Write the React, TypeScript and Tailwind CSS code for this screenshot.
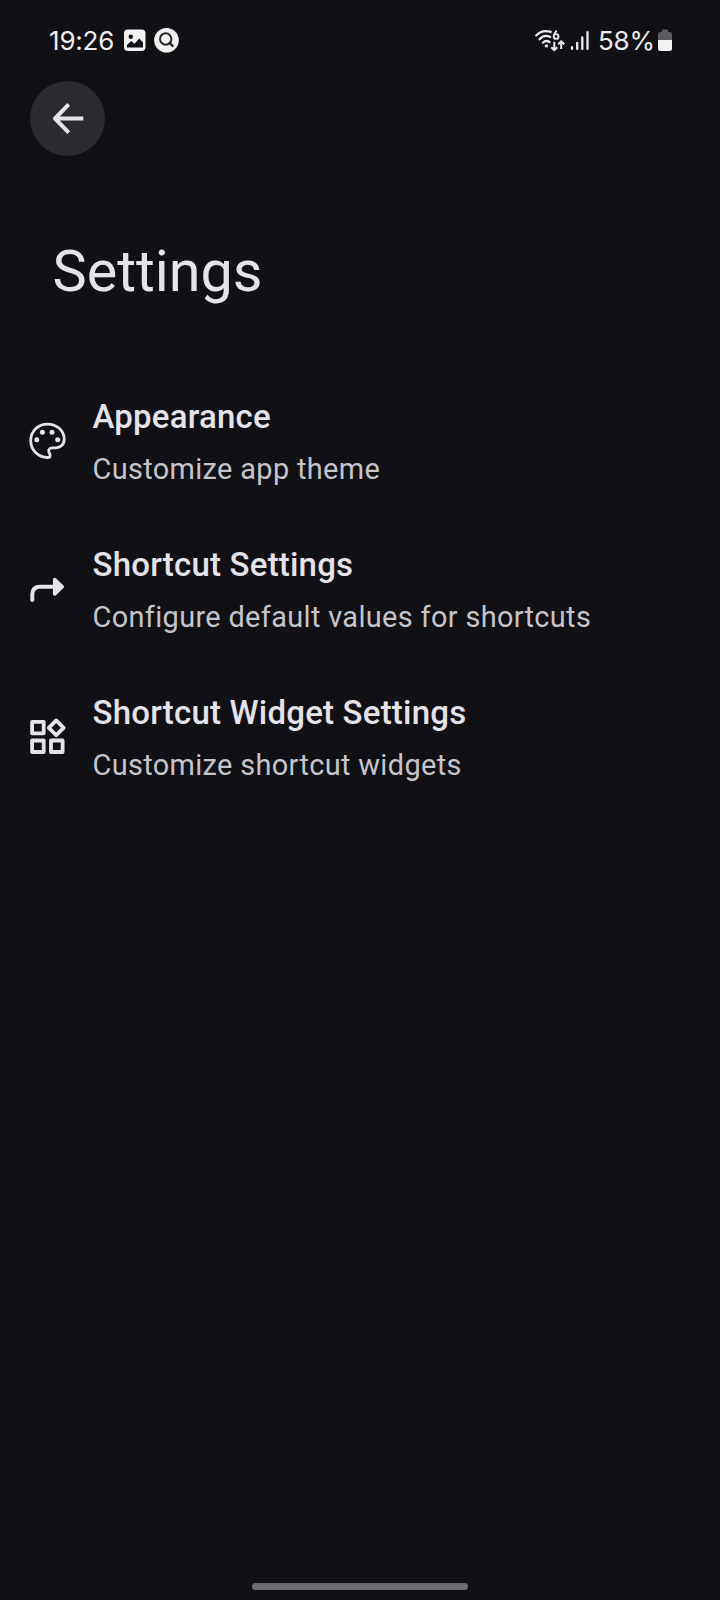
import type { ReactNode } from "react"

function PaletteIcon() {
  return (
    <svg width="48" height="48" viewBox="0 0 48 48" fill="none" stroke="#e5e3e9" strokeWidth="2.8">
      <path
        d="M23.5 40.5C14.2 40.5 6.7 33.1 6.7 23.6S14.2 7.1 23.6 7.1s16.6 6.8 16.6 15.3c0 5.3-3.8 8.4-8.4 8.4h-3.500c-2.600 0-4 1.700-3.600 3.700.3 1.400 1.400 2.200 1.400 3.900 0 1.300-1 2.100-2.600 2.100Z"
        strokeLinejoin="round"
      />
      <g fill="#e5e3e9" stroke="none">
        <circle cx="12.8" cy="22.7" r="2.5" />
        <circle cx="18.4" cy="15.3" r="2.5" />
        <circle cx="28" cy="15.3" r="2.5" />
        <circle cx="33.7" cy="22.7" r="2.5" />
      </g>
    </svg>
  )
}

function ShortcutIcon() {
  return (
    <svg width="48" height="48" viewBox="0 0 48 48" fill="none" stroke="#e5e3e9">
      <path d="M8.3 34.9V29.5Q8.3 21.7 16 21.7H30" strokeWidth="4" strokeLinecap="round" />
      <path d="M30.7 14.5L38.3 21.7L30.7 28.9Z" fill="#e5e3e9" strokeWidth="3.5" strokeLinejoin="round" />
    </svg>
  )
}

function WidgetsIcon() {
  return (
    <svg width="48" height="48" viewBox="0 0 48 48" fill="none" stroke="#e5e3e9" strokeWidth="3.8" strokeLinejoin="round">
      <rect x="8.1" y="8.9" width="11.6" height="11.4" />
      <rect x="8.1" y="27.5" width="11.6" height="11.5" />
      <rect x="27" y="27.5" width="11.6" height="11.5" />
      <path d="M32.2 7.400L39.600 14.800L32.200 22.200L24.800 14.800Z" />
    </svg>
  )
}

const items: { title: string; subtitle: string; icon: ReactNode }[] = [
  { title: "Appearance", subtitle: "Customize app theme", icon: <PaletteIcon /> },
  { title: "Shortcut Settings", subtitle: "Configure default values for shortcuts", icon: <ShortcutIcon /> },
  { title: "Shortcut Widget Settings", subtitle: "Customize shortcut widgets", icon: <WidgetsIcon /> },
]

function StatusBar() {
  return (
    <div className="flex h-20 items-center justify-between px-12 font-[Inter,sans-serif] text-[26px] leading-none text-[#ededf0]">
      <div className="flex items-center">
        <span className="w-[76px] pt-[2px] pl-px tracking-[-0.2px]">19:26</span>
        {/* Picture notification */}
        <svg width="22" height="22" viewBox="0 0 22 22">
          <rect y="0.5" width="21.5" height="21.5" rx="4" fill="#f2f2f3" />
          <circle cx="6.8" cy="7.8" r="2.2" fill="#111116" />
          <path d="M3 18.5V16L7.300 12L10.500 14.800L15.300 9.500L19 13.500V18.500Z" fill="#111116" />
        </svg>
        {/* Search notification */}
        <svg className="ml-2" width="25" height="26" viewBox="0 0 25 26" fill="none" stroke="#28282c">
          <circle cx="12.5" cy="13.3" r="12.3" fill="#f2f2f3" stroke="none" />
          <circle cx="11.7" cy="12" r="5.7" strokeWidth="2" />
          <path d="M15.8 16.100L18.600 18.900" strokeWidth="2.4" strokeLinecap="round" />
        </svg>
      </div>
      <div className="flex items-center">
        <svg width="56" height="26" viewBox="0 0 56 26" fill="none" stroke="#ededf0">
          {/* Wi-Fi 6 */}
          <g strokeWidth="2.2" strokeLinecap="round">
            <path d="M2.2 8.4C6 4.300 11.500 3.300 16.800 4.900" />
            <path d="M5.5 12.3C8.300 8.900 12.500 8.200 16.200 9.900" />
            <path d="M8.8 15.7C11 13.700 13.600 13.600 15.700 15.200" />
          </g>
          <circle cx="12.4" cy="18.9" r="1.7" fill="#ededf0" stroke="none" />
          <circle cx="22.1" cy="9.500" r="2.4" strokeWidth="1.9" />
          <path d="M19.700 9.300C19.700 6.900 20.900 5.500 22.700 3.600" strokeWidth="1.9" />
          <path d="M20.3 14.800V23M17.300 20.200L20.300 23.200L23.300 20.200M27.200 22V14.500M24.200 17.300L27.200 14.300L30.200 17.300" strokeWidth="2" />
          {/* Signal bars */}
          <path d="M38 20.200V21.900M43.200 15.800V21.900M48.300 10.400V21.900M53.500 5.100V21.900" strokeWidth="2.3" strokeLinecap="round" />
        </svg>
        <span className="ml-2 w-[60px] whitespace-nowrap pt-[2px] tracking-[-0.2px]">58%</span>
        <svg width="14" height="22" viewBox="0 0 14 22">
          <path d="M4 1.5Q4 0.5 5 0.5H9Q10 0.5 10 1.5V3H11.5Q14 3 14 5.5V11.500H0V5.500Q0 3 2.500 3H4Z" fill="#5c5c60" />
          <path d="M0 11H14V19.500Q14 22 11.500 22H2.500Q0 22 0 19.500Z" fill="#f2f2f3" />
        </svg>
      </div>
    </div>
  )
}

export default function App() {
  return (
    <div className="flex h-[1600px] w-[720px] flex-col overflow-hidden bg-[#111015] font-[Roboto,sans-serif] text-[#e5e3e9]">
      <StatusBar />

      <button className="mt-[0.5px] ml-[30px] flex size-[75px] items-center justify-center rounded-full bg-[#2a2b2f]" aria-label="Back">
        <svg width="36" height="36" viewBox="0 0 36 36" fill="none" stroke="#e5e3e9" strokeWidth="4">
          <path d="M18.7 4.400L5 18.500L18.700 32.600M5.500 18.500H33.300" strokeLinejoin="round" />
        </svg>
      </button>

      <h1 className="mt-[81.5px] ml-[52.5px] text-[57.5px] leading-[70px]">Settings</h1>

      <ul className="mt-[60px] flex flex-col">
        {items.map((item) => (
          <li key={item.title} className="flex h-[148px] items-center pl-6">
            {item.icon}
            <div className="ml-[20.5px] pt-1">
              <p className="text-[33px] leading-[52px] font-medium tracking-[0.2px]">{item.title}</p>
              <p className="text-[28.9px] leading-[53px] tracking-[0.35px] text-[#c5c4ca]">{item.subtitle}</p>
            </div>
          </li>
        ))}
      </ul>

      {/* Gesture bar */}
      <div className="mx-auto mt-auto mb-[10px] h-[7.5px] w-[216px] rounded-full bg-[#6c6c6e]" />
    </div>
  )
}
